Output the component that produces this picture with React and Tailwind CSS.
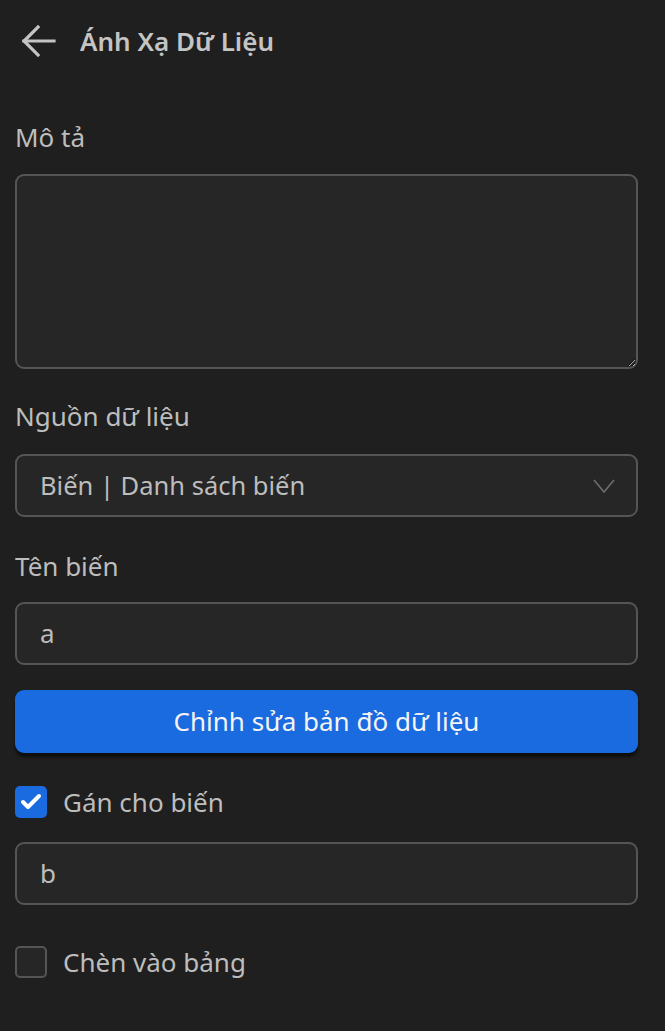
import { Check } from "lucide-react";

export default function App() {
  return (
    <div
      className="min-h-[1031px] w-full bg-[#1f1f1f] pl-[15px] pr-[27px] text-[#bdbdbd]"
      style={{ fontFamily: '"Noto Sans", "Open Sans", sans-serif' }}
    >
      {/* header */}
      <div className="flex h-[82px] items-center gap-[24px] pl-[7px]">
        <svg width="34" height="34" viewBox="0 0 34 34" fill="none" stroke="#c4c4c4" strokeWidth="3.2" strokeLinecap="square">
          <path d="M2 17H32" />
          <path d="M16 3L2 17L16 31" />
        </svg>
        <h1 className="text-[26px] font-semibold leading-[40px] text-[#c4c4c4]">Ánh Xạ Dữ Liệu</h1>
      </div>

      <div className="flex flex-col">
        <label className="mt-[35px] text-[26px] leading-[40px]">Mô tả</label>
        <textarea className="mt-[17px] h-[195px] w-full resize-y rounded-[9px] border-2 border-[#555555] bg-[#262626] p-3 text-[26px] outline-none" />

        <label className="mt-[27px] text-[26px] leading-[40px]">Nguồn dữ liệu</label>
        <div className="mt-[18px] flex h-[63px] items-center justify-between rounded-[9px] border-2 border-[#555555] bg-[#262626] pl-[23px] pr-[21px]">
          <span className="text-[25.5px]">Biến | Danh sách biến</span>
          <svg width="22" height="14" viewBox="0 0 22 14" fill="none" stroke="#6e6e6e" strokeWidth="1.6">
            <path d="M1 1L11 13L21 1" />
          </svg>
        </div>

        <label className="mt-[29px] text-[26px] leading-[40px]">Tên biến</label>
        <div className="mt-[16px] flex h-[63px] items-center rounded-[9px] border-2 border-[#555555] bg-[#262626] pl-[23px]">
          <span className="text-[26px]">a</span>
        </div>

        <button className="mt-[25px] flex h-[63px] items-center justify-center rounded-[9px] bg-[#1a6ae0] text-[26px] text-[#f4f4f4] shadow-[0_4px_3px_rgba(0,0,0,0.55)]">
          Chỉnh sửa bản đồ dữ liệu
        </button>

        <div className="mt-[33px] flex h-[32px] items-center gap-[16px]">
          <div className="flex h-[32px] w-[32px] items-center justify-center rounded-[5px] bg-[#1a6ae0]">
            <Check size={24} strokeWidth={4} className="text-white" />
          </div>
          <span className="text-[26px]">Gán cho biến</span>
        </div>

        <div className="mt-[24px] flex h-[63px] items-center rounded-[9px] border-2 border-[#555555] bg-[#262626] pl-[23px]">
          <span className="text-[26px]">b</span>
        </div>

        <div className="mt-[41px] flex h-[32px] items-center gap-[16px]">
          <div className="h-[32px] w-[32px] rounded-[5px] border-2 border-[#555555] bg-[#262626]" />
          <span className="text-[26px]">Chèn vào bảng</span>
        </div>
      </div>
    </div>
  );
}
